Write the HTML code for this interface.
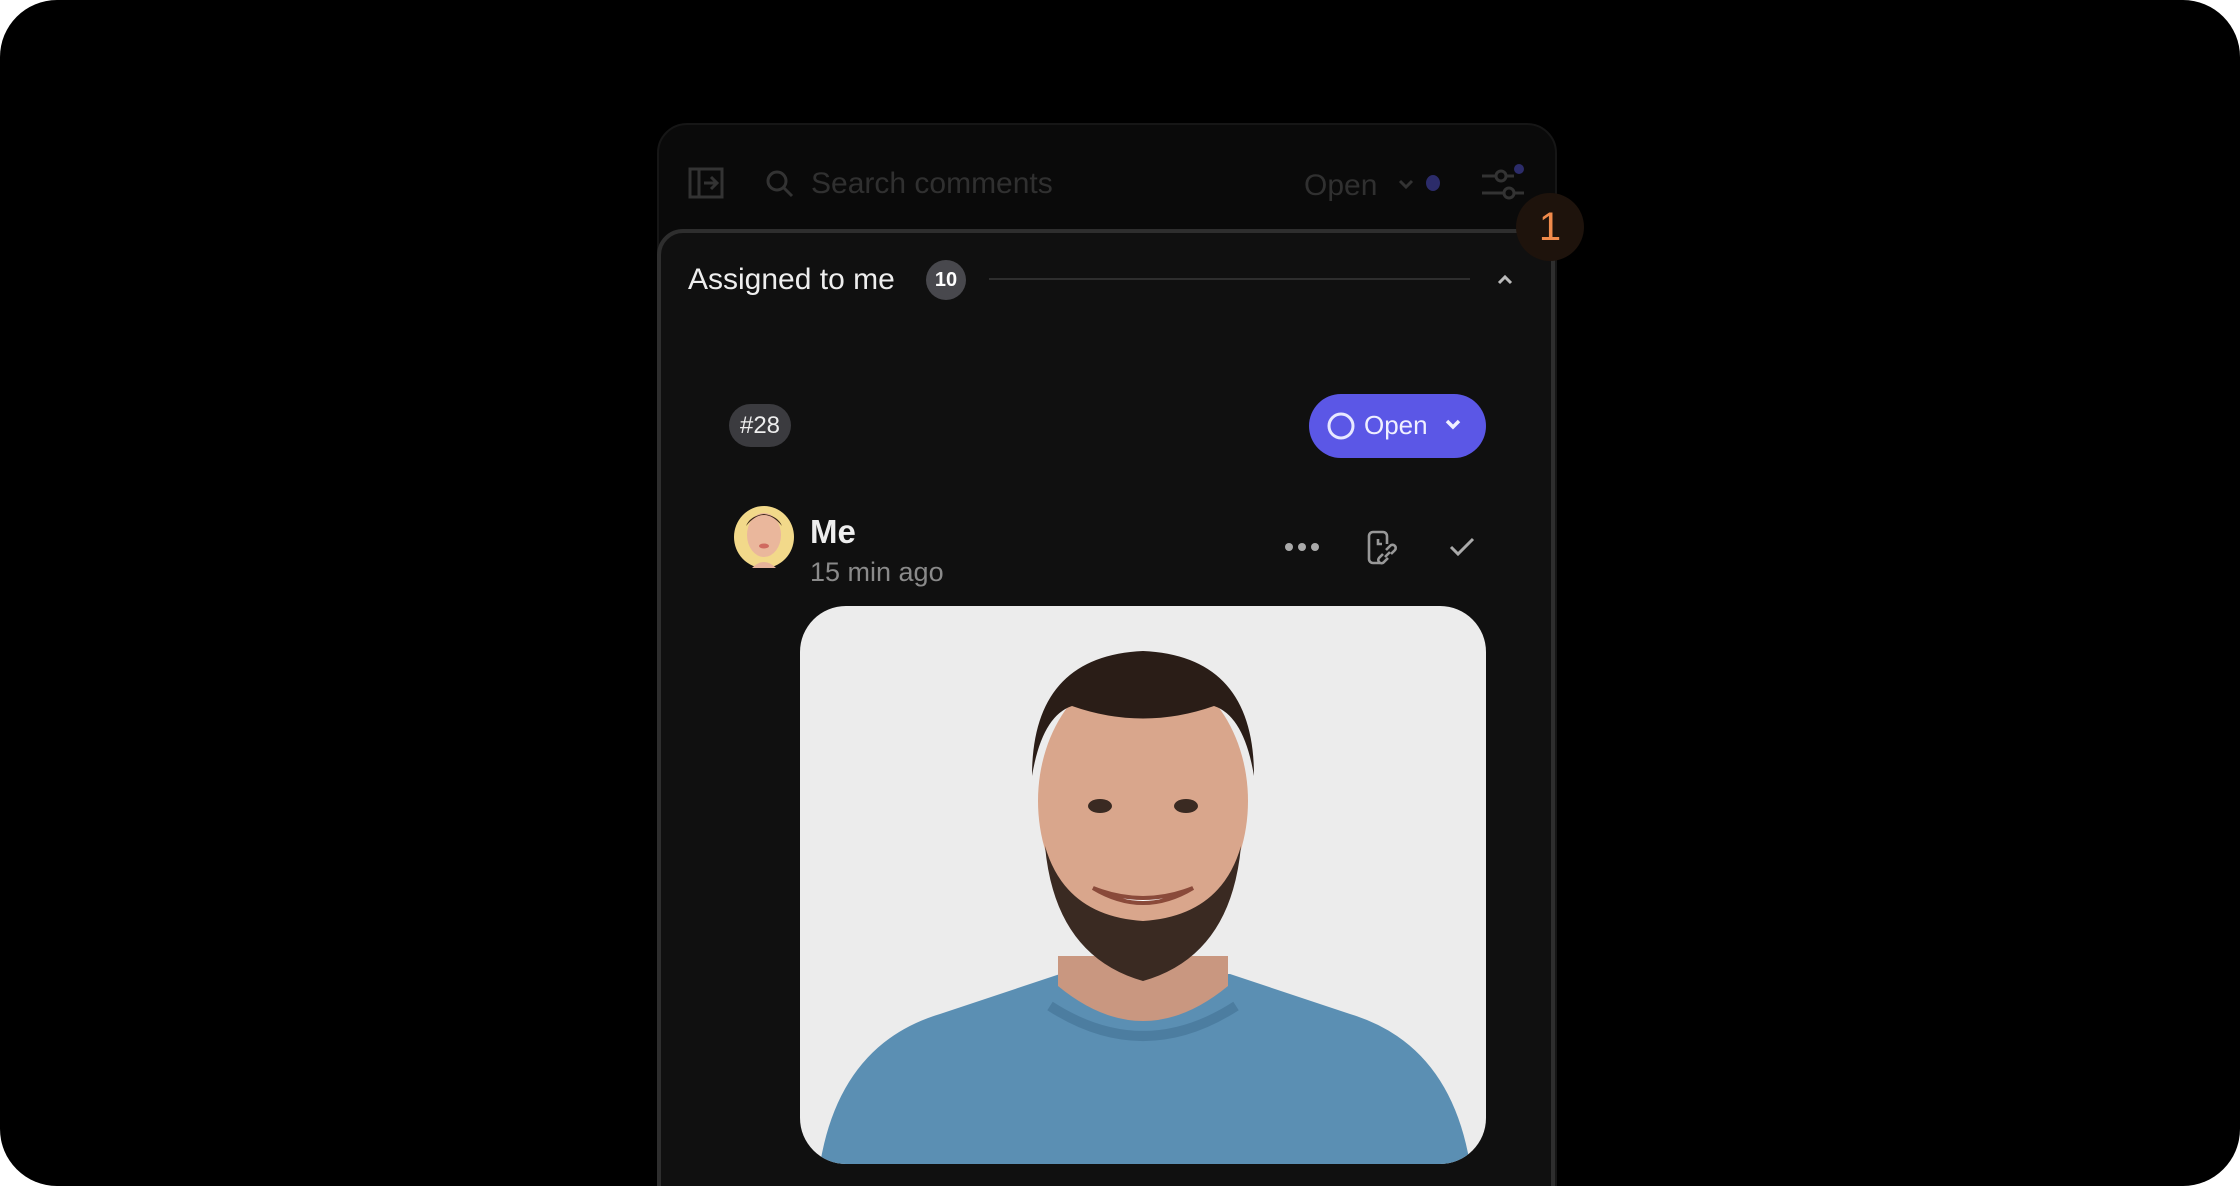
<!DOCTYPE html>
<html><head><meta charset="utf-8"><style>
*{margin:0;padding:0;box-sizing:border-box}
html,body{width:2240px;height:1186px;background:#fff;overflow:hidden;font-family:"Liberation Sans",sans-serif}
.frame{position:absolute;left:0;top:0;width:2240px;height:1186px;background:#000;border-radius:57px;overflow:hidden}
.panel{position:absolute;left:657px;top:123px;width:900px;height:1100px;background:#0a0a0a;border:2px solid #161616;border-radius:30px}
.card{position:absolute;left:657px;top:229px;width:898px;height:1000px;background:#101010;border:4px solid #2e2e2e;border-radius:26px}
.abs{position:absolute}
</style></head><body><div class="frame">
<div class="panel"></div>
<svg class="abs" style="left:688px;top:167px" width="36" height="32" viewBox="0 0 36 32" fill="none" stroke="#333" stroke-width="3"><rect x="2" y="2" width="32" height="28"/><line x1="11" y1="2" x2="11" y2="30"/><path d="M16 16h12M23 10l6 6-6 6"/></svg>
<svg class="abs" style="left:765px;top:169px" width="30" height="30" viewBox="0 0 30 30" fill="none" stroke="#333" stroke-width="3"><circle cx="12" cy="12" r="9"/><path d="M19 19l8 8"/></svg>
<div class="abs" style="left:811px;top:167px;font-size:30px;color:#303030">Search comments</div>
<div class="abs" style="left:1304px;top:169px;font-size:30px;color:#303030">Open</div>
<svg class="abs" style="left:1398px;top:178px" width="16" height="12" viewBox="0 0 16 12" fill="none" stroke="#333" stroke-width="3"><path d="M2 3l6 6 6-6"/></svg>
<div class="abs" style="left:1426px;top:175px;width:14px;height:16px;border-radius:50%;background:#2c2c6a"></div>
<svg class="abs" style="left:1480px;top:160px" width="46" height="44" viewBox="0 0 46 44" fill="none" stroke="#333" stroke-width="3"><path d="M2 16h14M26 16h8M2 33h22M34 33h10"/><circle cx="21" cy="16" r="5"/><circle cx="29" cy="33" r="5"/><circle cx="39" cy="9" r="5" fill="#2c2c6a" stroke="none"/></svg>
<div class="card"></div>
<div class="abs" style="left:1516px;top:193px;width:68px;height:68px;border-radius:50%;background:#1e130c;color:#f08a4b;font-size:40px;text-align:center;line-height:68px">1</div>
<div class="abs" style="left:688px;top:263px;font-size:30px;color:#eee">Assigned to me</div>
<div class="abs" style="left:926px;top:260px;width:40px;height:40px;border-radius:50%;background:#48484d;color:#fff;font-size:20px;font-weight:bold;text-align:center;line-height:40px">10</div>
<div class="abs" style="left:989px;top:278px;width:481px;height:2px;background:#2e2e2e"></div>
<svg class="abs" style="left:1496px;top:273px" width="18" height="12" viewBox="0 0 18 12" fill="none" stroke="#bbb" stroke-width="3"><path d="M3 10l6-6 6 6"/></svg>
<div class="abs" style="left:729px;top:404px;width:62px;height:43px;border-radius:22px;background:#3b3b3f;color:#eee;font-size:24px;text-align:center;line-height:43px">#28</div>
<div class="abs" style="left:1309px;top:394px;width:177px;height:64px;border-radius:32px;background:#5b57e6"></div>
<svg class="abs" style="left:1326px;top:411px" width="30" height="30" viewBox="0 0 30 30" fill="none" stroke="#e8e8ff" stroke-width="3"><circle cx="15" cy="15" r="12"/></svg>
<div class="abs" style="left:1364px;top:410px;font-size:26px;color:#f0f0ff">Open</div>
<svg class="abs" style="left:1444px;top:418px" width="18" height="14" viewBox="0 0 18 14" fill="none" stroke="#f0f0ff" stroke-width="3.5"><path d="M3 3l6 6 6-6"/></svg>
<svg class="abs" style="left:734px;top:506px" width="60" height="62" viewBox="0 0 60 62"><ellipse cx="30" cy="31" rx="30" ry="31" fill="#f2d98a"/><ellipse cx="30" cy="29" rx="17" ry="22" fill="#eab79c"/><path d="M12 20q18-22 36 0q-4-10-18-12q-14 2-18 12z" fill="#3b2418"/><ellipse cx="30" cy="40" rx="5" ry="2.5" fill="#d06a60"/><path d="M18 62q12-12 24 0z" fill="#e6b39a"/></svg>
<div class="abs" style="left:810px;top:513px;font-size:33px;font-weight:bold;color:#eee">Me</div>
<div class="abs" style="left:810px;top:557px;font-size:27px;color:#8a8a8a">15 min ago</div>
<svg class="abs" style="left:1284px;top:540px" width="36" height="14" viewBox="0 0 36 14" fill="#aaa"><circle cx="5" cy="7" r="4"/><circle cx="18" cy="7" r="4"/><circle cx="31" cy="7" r="4"/></svg>
<svg class="abs" style="left:1366px;top:530px" width="32" height="36" viewBox="0 0 32 36" fill="none" stroke="#999" stroke-width="2.6"><path d="M14 33H7a4 4 0 0 1-4-4V6a4 4 0 0 1 4-4h10a4 4 0 0 1 4 4v8"/><path d="M12 9v5h4"/><path d="M20 20l4-4a3 3 0 0 1 5 4l-4 4M22 28l-4 4a3 3 0 0 1-5-4l4-4M19 27l5-5"/></svg>
<svg class="abs" style="left:1448px;top:536px" width="28" height="22" viewBox="0 0 28 22" fill="none" stroke="#aaa" stroke-width="3"><path d="M3 11l7 7L25 3"/></svg>
<svg class="abs" style="left:800px;top:606px" width="686" height="558" viewBox="0 0 686 558">
<defs><clipPath id="c"><rect width="686" height="558" rx="46"/></clipPath></defs>
<g clip-path="url(#c)">
<rect width="686" height="558" fill="#ececec"/>
<path d="M20 558q20-120 120-150l120-40h170l120 40q100 30 120 150z" fill="#5b8fb3"/>
<path d="M258 380q85 70 170 0v-30H258z" fill="#c99780"/>
<path d="M250 400q93 60 186 0" fill="none" stroke="#4c7da0" stroke-width="10"/>
<ellipse cx="343" cy="195" rx="105" ry="135" fill="#d9a68c"/>
<path d="M245 240q10 110 98 135q88-25 98-135q-20 70-98 75q-78-5-98-75z" fill="#3a2a22"/>
<path d="M232 170q0-120 111-125q111 5 111 125q-10-60-40-70q-71 25-142 0q-30 10-40 70z" fill="#2a1d17"/>
<path d="M293 282q50 30 100 0q-50 20-100 0z" fill="#fff" stroke="#8a4a3a" stroke-width="4"/>
<ellipse cx="300" cy="200" rx="12" ry="7" fill="#3a2a22"/><ellipse cx="386" cy="200" rx="12" ry="7" fill="#3a2a22"/>
</g></svg>
</div></body></html>
